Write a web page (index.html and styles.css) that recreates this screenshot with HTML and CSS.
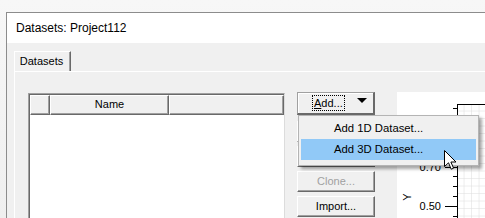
FILE: index.html
```html
<!DOCTYPE html>
<html>
<head>
<meta charset="utf-8">
<link rel="stylesheet" href="styles.css">
</head>
<body>
<div class="desktop">
  <div class="window">
    <div class="titlebar">Datasets: Project112</div>
    <div class="client">
      <div class="tabs"><div class="tab">Datasets</div></div>
      <div class="panel">
        <div class="table">
          <div class="thead">
            <div class="th c0"></div>
            <div class="th c1">Name</div>
            <div class="th c2"></div>
          </div>
          <div class="tbody"></div>
        </div>
        <div class="buttons">
          <div class="btn add"><span class="focus"><u>A</u>dd...</span><span class="arrow"></span></div>
          <div class="btn"></div>
          <div class="btn"></div>
          <div class="btn disabled">Clone...</div>
          <div class="btn">Import...</div>
        </div>
        <div class="plot">
          <svg class="chart" width="88" height="126" viewBox="0 0 88 126">
            <defs>
              <pattern id="grid" x="60" y="12" width="7.5" height="7.5" patternUnits="userSpaceOnUse">
                <path d="M7.5 0 V7.5 M0 7.5 H7.5" stroke="#dcdcdc" stroke-width="1" fill="none"/>
              </pattern>
            </defs>
            <rect x="61" y="13" width="27" height="113" fill="url(#grid)"/>
            <path d="M60.5 12 V126 M60 12.5 H88" stroke="#000" stroke-width="1" fill="none"/>
            <path d="M56 16.5 H60 M56 26.5 H60 M56 36.5 H60 M56 45.5 H60 M56 55.5 H60 M56 65.5 H60 M48 75.5 H60 M56 84.5 H60 M56 94.5 H60 M56 104.5 H60 M48 114.5 H60 M56 124.5 H60" stroke="#000" stroke-width="1" fill="none"/>
            <text x="44" y="79" class="tick" text-anchor="end">0.70</text>
            <text x="44" y="118" class="tick" text-anchor="end">0.50</text>
            <text x="0" y="0" class="axis" transform="translate(14 105) rotate(-90)" text-anchor="middle">Y</text>
          </svg>
        </div>
      </div>
    </div>
  </div>
  <div class="menu">
    <div class="item">Add 1D Dataset...</div>
    <div class="item hot">Add 3D Dataset...</div>
  </div>
  <svg class="cursor" width="13" height="21" viewBox="0 0 13 21">
    <path d="M0.5 0.5 V16.5 L4.5 12.8 L7.2 19.2 L9.6 18.2 L6.9 12 H12 Z" fill="#fff" stroke="#000" stroke-width="1" stroke-linejoin="miter"/>
  </svg>
</div>
</body>
</html>
```
FILE: styles.css
```css
html, body {
  margin: 0;
  padding: 0;
}
body {
  background: #f3f3f3;
  font-family: "Liberation Sans", Arial, sans-serif;
  font-size: 11px;
  color: #000;
}
.desktop {
  position: relative;
  width: 485px;
  height: 218px;
  overflow: hidden;
  background: linear-gradient(#f7f7f7, #efefef);
}
.window {
  margin: 12px 0 0 6px;
  border-top: 1px solid #8c8c8c;
  border-left: 1px solid #8c8c8c;
  height: 220px;
  background: #f0f0f0;
}
.titlebar {
  height: 30px;
  line-height: 30px;
  background: #fff;
  padding-left: 9px;
  font-family: "Liberation Sans", Arial, sans-serif;
  font-size: 12px;
  color: #000;
}
.client {
  background: #f0f0f0;
  padding: 8px 0 0 7px;
  height: 180px;
}
.tabs {
  display: flex;
  height: 20px;
  position: relative;
  z-index: 1;
}
.tab {
  width: 57px;
  height: 20px;
  box-sizing: border-box;
  border-top: 1px solid #fff;
  border-left: 1px solid #fff;
  border-right: 1px solid #696969;
  box-shadow: inset -1px 0 #a0a0a0;
  background: #f0f0f0;
  text-align: center;
  line-height: 19px;
  padding-right: 2px;
}
.panel {
  display: flex;
  align-items: flex-start;
  border-top: 1px solid #fff;
  border-left: 1px solid #fff;
  padding: 21px 0 0 13px;
  height: 160px;
}
.table {
  width: 257px;
  flex: none;
  height: 140px;
  box-sizing: border-box;
  border-top: 1px solid #a0a0a0;
  border-left: 1px solid #a0a0a0;
  box-shadow: inset 1px 1px #696969;
  padding: 1px 0 0 1px;
  border-right: 1px solid #dcdcdc;
  background: #fff;
  display: flex;
  flex-direction: column;
}
.thead {
  display: flex;
  height: 20px;
  background: #f0f0f0;
}
.th {
  box-sizing: border-box;
  height: 20px;
  border-top: 1px solid #fff;
  border-left: 1px solid #fff;
  border-right: 1px solid #696969;
  border-bottom: 1px solid #696969;
  box-shadow: inset -1px -1px #a0a0a0;
  text-align: center;
  line-height: 17px;
}
.c0 { width: 20px; }
.c1 { width: 119px; }
.c2 { flex: 1; }
.tbody {
  flex: 1;
  background: #fff;
}
.buttons {
  margin-left: 12px;
  width: 78px;
  flex: none;
  display: flex;
  flex-direction: column;
  margin-top: -1px;
}
.btn {
  box-sizing: border-box;
  height: 21px;
  margin-top: 4px;
  border-top: 1px solid #fff;
  border-left: 1px solid #fff;
  border-right: 1px solid #696969;
  border-bottom: 1px solid #696969;
  box-shadow: inset -1px -1px #a0a0a0;
  background: #f0f0f0;
  text-align: center;
  line-height: 19px;
}
.btn.add {
  margin-top: 0;
  margin-bottom: 2px;
  height: 23px;
  border-top: 1px solid #a0a0a0;
  border-left: 1px solid #a0a0a0;
  border-right: 2px solid #696969;
  border-bottom: 2px solid #696969;
  box-shadow: inset 1px 1px #fff;
  display: flex;
  align-items: center;
  padding-left: 15px;
  position: relative;
}
.focus {
  outline: 1px dotted #000;
  outline-offset: 0;
  line-height: 14px;
  padding: 0 1px;
}
.arrow {
  position: absolute;
  right: 6px;
  top: 5px;
  width: 0;
  height: 0;
  border-left: 5px solid transparent;
  border-right: 5px solid transparent;
  border-top: 5px solid #000;
}
.btn.disabled {
  color: #a0a0a0;
}
.plot {
  margin-left: 22px;
  margin-top: -1px;
  flex: 1;
  height: 130px;
  background: #fff;
}
.chart {
  display: block;
}
.tick {
  font-family: "Liberation Sans", Arial, sans-serif;
  font-size: 11px;
  fill: #000;
}
.axis {
  font-family: "Liberation Sans", Arial, sans-serif;
  font-size: 11px;
  fill: #000;
}
.menu {
  position: absolute;
  left: 298px;
  top: 115px;
  width: 181px;
  height: 51px;
  box-sizing: border-box;
  background: #f0f0f0;
  border: 1px solid #b4b4b4;
  box-shadow: 3px 3px 3px rgba(0, 0, 0, 0.35);
  padding: 2px 2px;
}
.item {
  height: 21px;
  line-height: 21px;
  padding-left: 33px;
  font-size: 11.3px;
}
.item.hot {
  background: #91c9f7;
}
.cursor {
  position: absolute;
  left: 444px;
  top: 150px;
}
```
